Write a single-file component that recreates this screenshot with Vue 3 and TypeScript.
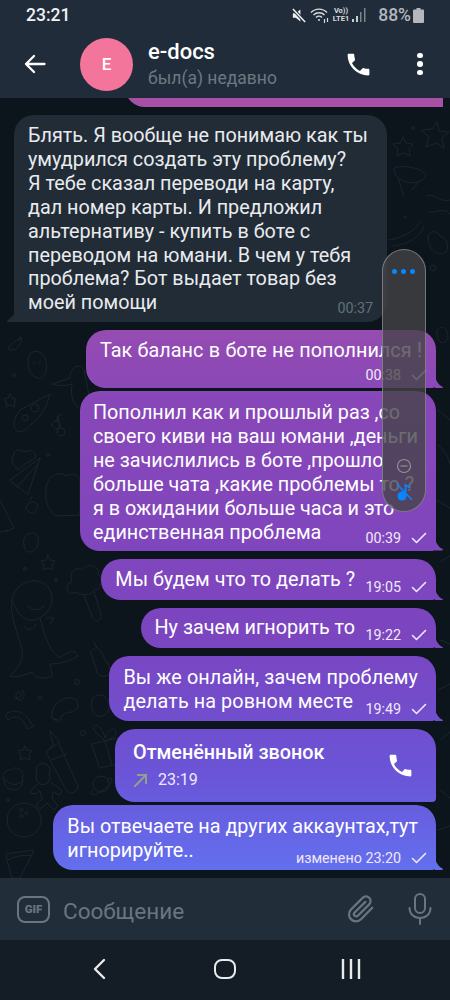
<script setup lang="ts">
type Msg = {
  id: number;
  lines: string[];
  time: string;
  cls: string;
};

const outgoing: Msg[] = [
  { id: 1, lines: ["Так баланс в боте не пополнился !"], time: "00:38", cls: "m-b2" },
  {
    id: 2,
    lines: [
      "Пополнил как и прошлый раз ,со",
      "своего киви на ваш юмани ,деньги",
      "не зачислились в боте ,прошло",
      "больше чата ,какие проблемы то ?",
      "я в ожидании больше часа и это",
      "единственная проблема",
    ],
    time: "00:39",
    cls: "m-b3",
  },
  { id: 3, lines: ["Мы будем что то делать ?"], time: "19:05", cls: "m-b4" },
  { id: 4, lines: ["Ну зачем игнорить то"], time: "19:22", cls: "m-b5" },
  {
    id: 5,
    lines: ["Вы же онлайн, зачем проблему", "делать на ровном месте"],
    time: "19:49",
    cls: "m-two",
  },
];

const incoming = [
  "Блять. Я вообще не понимаю как ты",
  "умудрился создать эту проблему?",
  "Я тебе сказал переводи на карту,",
  "дал номер карты. И предложил",
  "альтернативу - купить в боте с",
  "переводом на юмани. В чем у тебя",
  "проблема? Бот выдает товар без",
  "моей помощи",
];

const phonePath =
  "M6.6 10.8c1.4 2.8 3.8 5.1 6.6 6.6l2.2-2.2c.3-.3.7-.4 1-.2 1.1.4 2.3.6 3.6.6.6 0 1 .4 1 1V20c0 .6-.4 1-1 1C10.6 21 3 13.4 3 4c0-.6.4-1 1-1h3.5c.6 0 1 .4 1 1 0 1.300.2 2.500.6 3.600.1.300 0 .700-.2 1z";

// wallpaper doodles, in screen coordinates
const doodles: string[] = [
  // dino
  "M12 600C14 585 30 578 40 582 50 584 54 596 51 605 48 614 38 622 28 620 22 618 16 612 12 600ZM12 600C9 615 18 632 22 650 24 660 18 668 10 676 14 678 24 676 32 672 34 678 44 680 52 676 52 670 50 668 50 664 60 664 72 660 78 656 74 648 68 652 60 658 46 648 44 630 40 618M28 606C32 611 40 611 44 606M46 618 54 618 50 624M24 626C28 632 34 630 36 624",
  // broccoli + stick
  "M72 582C68 572 76 566 82 570 88 562 100 566 98 574 104 578 102 590 94 590 92 596 80 596 76 592 70 596 64 590 68 584ZM84 596 92 616C94 624 102 622 101 614L94 592",
  // popsicle + duck
  "M92 656C88 650 96 645 100 650L110 668C112 674 104 680 98 674ZM94 642 97 648",
  "M92 700C96 692 106 694 108 702 112 708 106 718 98 716 92 714 90 706 92 700Z",
  // shrimp, rainbow, spiral
  "M52 718C50 706 62 696 72 698 80 700 80 710 72 712 66 712 62 714 60 720ZM52 718 58 722",
  "M6 714C14 708 26 712 30 722L34 726 28 729 22 720C18 716 12 716 8 720Z",
  "M22 690C26 694 24 700 20 700 16 700 14 694 18 692 22 690 24 700 14 698",
  // small circles and stars
  "M48 555l2 5 5 1-3 4 1 5-5-2-5 2 1-5-3-4 5-1z",
  "M25 746l2 4 5 1-3 4 1 5-5-2-5 2 1-5-3-4 5-1z",
  "M10 394l2 4 4 1-2 4 1 4-5-2-4 2 1-4-3-4 4-1z",
  "M403 137l3 6 7 1-4 5 1 7-7-3-6 3 1-7-5-5 7-1z",
  "M437 122l2 9 10 1-7 6 2 10-8-5-10 4 3-10-8-7 11-1z",
  // pencil
  "M50 731 53 745 46 752 66 790C70 796 78 792 78 786L60 746 58 740ZM52 760 66 754M57 744 49 749",
  // gift
  "M92 744 118 738 124 762 100 768ZM105 741 112 765M105 741C96 732 92 730 94 726 98 722 104 732 105 738 108 730 114 726 116 732 116 738 110 738 105 741",
  // cupcake
  "M4 780C0 774 8 768 12 770 16 764 26 772 22 778 24 784 20 790 14 790 8 790 4 786 4 780ZM6 780C10 786 18 786 24 780",
  // gingerbread
  "M37 774a7 7 0 1 0 12 0 7 7 0 1 0-12 0M38 784l-6 5-2 4 5 1 5-3 2 8-6 6 4 4 7-6 7 7 4-4-6-8 1-6 7 3 2-4-6-5-5-3",
  // planet
  "M93 784a8 8 0 1 0 16 0 8 8 0 1 0-16 0M93 790C89 794 91 796 96 794 102 792 112 784 112 780 112 778 110 778 108 779",
  // bowling ball
  "M7 820a17 17 0 1 0 34 0 17 17 0 1 0-34 0M20 810a1.500 1.500 0 1 0 3 0 1.500 1.500 0 1 0-3 0M25 813a1.500 1.500 0 1 0 3 0 1.500 1.500 0 1 0-3 0M20 816a1.500 1.500 0 1 0 3 0 1.500 1.500 0 1 0-3 0",
  // pizza slice
  "M6 854 34 850 20 878H12ZM8 860C16 856 26 854 32 856",
  // leaf, ghost, cherries
  "M8 348C12 342 18 340 22 338 20 344 18 350 12 350ZM18 340 21 336",
  "M28 360C28 348 44 348 46 362 48 372 44 380 38 378 30 376 28 370 28 360ZM34 362v2M40 362v2",
  "M52 425a4 4 0 1 0 8 0 4 4 0 1 0-8 0M57 432a4 4 0 1 0 8 0 4 4 0 1 0-8 0M56 421 58 416M60 428 58 416 62 414",
  // bird
  "M52 384 70 378C70 368 78 362 84 370L90 400M52 384C60 386 66 386 72 384 70 398 74 404 78 408",
  // pizza mushroom
  "M20 410 50 394C46 410 38 420 30 425 24 434 14 434 14 424 14 418 18 414 20 410ZM31 408a4 4 0 1 0 8 0 4 4 0 1 0-8 0M22 418a3 3 0 1 0 6 0 3 3 0 1 0-6 0",
  // popcorn
  "M10 480 40 458 28 494ZM14 454C14 448 22 450 24 452 30 448 36 452 36 458 30 460 22 466 18 470 12 464 10 460 14 454ZM16 488 38 464",
  // cloud on the left of the purple bubble
  "M46 490C46 476 60 470 66 476 72 472 80 476 80 480L80 515 56 516C50 512 44 502 46 490Z",
  "M26 508C28 500 36 500 38 506 36 514 30 516 26 508ZM30 500 32 497",
  "M24 545C20 534 36 528 38 538 40 546 34 552 30 552 26 552 24 550 24 545Z",
  "M0 500 14 528 6 532M0 532 8 530",
  // right edge
  "M394 168C402 164 424 168 426 176 418 186 404 184 396 176ZM398 178 404 196M420 180 412 190",
  "M426 196C434 192 442 204 450 200M428 212C436 214 444 206 450 214",
  "M388 240C396 240 416 232 420 222M392 246C402 246 420 240 424 226",
  "M428 238C428 230 438 230 440 236 446 238 450 244 446 252 440 256 430 254 428 238Z",
  "M430 268a3 3 0 1 0 6 0 3 3 0 1 0-6 0",
  "M437 330C442 324 448 328 448 338 444 346 436 344 437 330ZM438 410 450 420M438 445C444 450 448 456 450 464M436 500 450 508M440 562 450 556M440 640 450 644M438 690 450 684M440 740 450 732M440 790 450 798M438 830 450 826",
];
</script>

<template>
  <div class="screen">
    <header class="top">
      <div class="status">
        <span class="clock">23:21</span>
        <div class="status-right">
          <svg class="st-mute" width="16" height="17" viewBox="0 0 17 17">
            <path d="M2 6h3l5-4v13l-5-4H2z" fill="#eceef0" />
            <path d="M2 1.500 15 15.500" stroke="#212c3a" stroke-width="3.500" />
            <path d="M2 1.500 15 15.500" stroke="#eceef0" stroke-width="1.600" />
          </svg>
          <svg class="st-wifi" width="20" height="17" viewBox="0 0 20 17" fill="none" stroke="#d8dbde" stroke-width="1.400">
            <path d="M1 5.500c4.500-4.500 11.500-4.500 16 0" />
            <path d="M3.500 8c3-3 8-3 11 0" />
            <path d="M6 10.500c1.700-1.700 4.300-1.700 6 0" />
            <circle cx="9" cy="13" r="1" fill="#d8dbde" stroke="none" />
            <path d="M14.500 16v-4M17.500 11v4" stroke-width="1.200" />
          </svg>
          <span class="volte">Vo))<br />LTE1</span>
          <svg class="st-signal" width="15" height="15" viewBox="0 0 15 15">
            <rect x="0" y="11" width="2" height="3" fill="#c8ccd0" />
            <rect x="4" y="8" width="2" height="6" fill="#c8ccd0" />
            <rect x="8" y="4" width="1.500" height="10" fill="#7d858d" />
            <rect x="12" y="0" width="1.500" height="14" fill="#7d858d" />
          </svg>
          <span class="pct">88%</span>
          <svg class="st-batt" width="11" height="15" viewBox="0 0 11 15">
            <path d="M3.500 0h4v1.500h2.500a1 1 0 0 1 1 1V14a1 1 0 0 1-1 1H1a1 1 0 0 1-1-1V2.500a1 1 0 0 1 1-1h2.500z" fill="#b4b8bc" />
          </svg>
        </div>
      </div>
      <div class="bar">
        <svg class="back" width="22" height="20" viewBox="0 0 22 20" fill="none" stroke="#fff" stroke-width="2.300" stroke-linecap="round" stroke-linejoin="round">
          <path d="M20.500 10H2M10 2 2 10l8 8" />
        </svg>
        <div class="avatar">E</div>
        <div class="who">
          <div class="name">e-docs</div>
          <div class="seen">был(а) недавно</div>
        </div>
        <svg class="call-ic" width="29" height="29" viewBox="0 0 24 24"><path :d="phonePath" fill="#fff" /></svg>
        <div class="more"><i></i><i></i><i></i></div>
      </div>
    </header>

    <main class="chat">
      <svg class="wall" width="450" height="780" viewBox="0 98 450 780" fill="none" stroke="#1a2530" stroke-width="1" stroke-linecap="round" stroke-linejoin="round">
        <path v-for="(d, i) in doodles" :key="i" :d="d" />
        <circle cx="14" cy="375" r="1.500" />
        <circle cx="48" cy="455" r="1.500" />
        <circle cx="25" cy="569" r="1.500" />
        <circle cx="56" cy="580" r="1.500" />
        <circle cx="77" cy="682" r="2.500" />
        <circle cx="40" cy="698" r="2" />
        <circle cx="83" cy="733" r="2.500" />
        <circle cx="8" cy="800" r="1.500" />
        <circle cx="413" cy="128" r="1.500" />
        <circle cx="405" cy="217" r="1.200" />
      </svg>

      <div class="msg out clipped"></div>

      <div class="msg in">
        <div class="cell">
          <div class="txt">
            <div v-for="l in incoming" :key="l">{{ l }}</div>
          </div>
          <span class="meta-in">00:37</span>
        </div>
        <svg class="tail-in" width="9" height="12" viewBox="0 0 9 12"><path d="M9 0v12H1c-1 0-1.300-.8-.6-1.500C4 8 7 5 9 0z" fill="#212c37" /></svg>
      </div>

      <div v-for="m in outgoing" :key="m.id" class="msg out" :class="m.cls">
        <div class="cell">
          <div class="txt">
            <div v-for="l in m.lines" :key="l">{{ l }}</div>
          </div>
          <span class="meta">
            {{ m.time }}
            <svg width="16" height="12" viewBox="0 0 16 12" fill="none" stroke="currentColor" stroke-width="1.600" stroke-linecap="round" stroke-linejoin="round"><path d="M1.500 6.500 5.500 10.500 14.500 1.500" /></svg>
          </span>
        </div>
      </div>

      <div class="msg out call-msg">
        <div class="call-body">
          <div class="call-title">Отменённый звонок</div>
          <div class="call-sub">
            <svg width="15" height="15" viewBox="0 0 15 15" fill="none" stroke="#8f9f8f" stroke-width="2" stroke-linecap="square"><path d="M2 13 13 2M5 2h8v8" /></svg>
            <span>23:19</span>
          </div>
        </div>
        <svg class="call-big" width="29" height="29" viewBox="0 0 24 24"><path :d="phonePath" fill="#fff" /></svg>
      </div>

      <div class="msg out last">
        <div class="cell">
          <div class="txt">
            <div>Вы отвечаете на других аккаунтах,тут</div>
            <div>игнорируйте..</div>
          </div>
          <span class="meta">
            изменено 23:20
            <svg width="16" height="12" viewBox="0 0 16 12" fill="none" stroke="currentColor" stroke-width="1.600" stroke-linecap="round" stroke-linejoin="round"><path d="M1.500 6.500 5.500 10.500 14.500 1.500" /></svg>
          </span>
        </div>
      </div>

      <aside class="float-panel">
        <div class="pdots"><i></i><i></i><i></i></div>
        <svg class="pminus" width="16" height="16" viewBox="0 0 16 16" fill="none" stroke="#8f9296" stroke-width="1.200"><circle cx="8" cy="8" r="6.500" /><path d="M4.500 8h7" /></svg>
        <svg class="pmute" width="18" height="20" viewBox="0 0 18 20">
          <circle cx="6" cy="14" r="4.500" fill="#0a84ff" />
          <path d="M9.500 14V3l5 3" fill="none" stroke="#0a84ff" stroke-width="1.800" />
          <path d="M1 2l15 16" stroke="#0a84ff" stroke-width="1.500" />
        </svg>
      </aside>
    </main>

    <div class="composer">
      <span class="gif">GIF</span>
      <span class="placeholder">Сообщение</span>
      <svg class="clip" width="30" height="30" viewBox="0 0 24 24" fill="none" stroke="#6b7580" stroke-width="1.800" stroke-linecap="round" stroke-linejoin="round">
        <path d="M21 11 12 20.200a5.500 5.500 0 0 1-8-7.800l9.300-9.300a3.700 3.700 0 0 1 5.300 5.200L9.500 17.400a1.800 1.800 0 0 1-2.600-2.600L15.500 6.300" />
      </svg>
      <svg class="mic" width="24" height="32" viewBox="0 0 24 32" fill="none" stroke="#6b7580" stroke-width="2" stroke-linecap="round">
        <rect x="7" y="1" width="10" height="19" rx="5" />
        <path d="M1.500 15c0 6 4.500 10 10.500 10s10.500-4 10.500-10M12 25v6" />
      </svg>
    </div>

    <nav class="navbar">
      <svg width="14" height="22" viewBox="0 0 14 22" fill="none" stroke="#e8eaec" stroke-width="2.400" stroke-linecap="round" stroke-linejoin="round"><path d="M12 2 3 11l9 9" /></svg>
      <span class="home"></span>
      <svg width="20" height="20" viewBox="0 0 20 20" stroke="#e8eaec" stroke-width="2.400"><path d="M2 0v20M10 0v20M18 0v20" /></svg>
    </nav>
  </div>
</template>

<style scoped>
.screen {
  width: 450px;
  height: 1000px;
  display: flex;
  flex-direction: column;
  overflow: hidden;
  background: #0d151c;
  font-family: Roboto, "Liberation Sans", sans-serif;
  color: #fff;
}

.top {
  height: 98px;
  flex-shrink: 0;
  background: #212c3a;
}

.status {
  height: 30px;
  display: flex;
  align-items: center;
  justify-content: space-between;
  padding: 0 26px;
}

.clock {
  font-size: 17.500px;
  font-weight: 500;
  color: #f0f1f2;
}

.status-right {
  display: flex;
  align-items: center;
}

.st-wifi {
  margin-left: 3px;
}

.volte {
  font-size: 7.500px;
  line-height: 8px;
  font-weight: 700;
  color: #d8dbde;
  margin-left: 3px;
  text-align: center;
}

.st-signal {
  margin-left: 3px;
}

.pct {
  font-size: 17.500px;
  font-weight: 500;
  color: #b4b8bc;
  margin-left: 11px;
}

.st-batt {
  margin-left: 2px;
}

.bar {
  height: 68px;
  display: flex;
  align-items: center;
  padding: 0 0 2px 24px;
}

.back {
  flex-shrink: 0;
}

.avatar {
  width: 53px;
  height: 53px;
  border-radius: 50%;
  background: #f4759b;
  margin-left: 34px;
  display: flex;
  align-items: center;
  justify-content: center;
  font-size: 17px;
  font-weight: 500;
  flex-shrink: 0;
}

.who {
  margin-left: 15px;
  flex: 1;
}

.name {
  font-size: 22px;
  font-weight: 500;
  line-height: 26px;
}

.seen {
  font-size: 17.500px;
  line-height: 24px;
  margin-top: 1px;
  color: #6d7883;
}

.call-ic {
  margin-right: 44px;
}

.more {
  width: 6px;
  display: flex;
  flex-direction: column;
  gap: 3px;
  margin-right: 27px;
}

.more i {
  width: 5.500px;
  height: 5.500px;
  border-radius: 50%;
  background: #fff;
}

.chat {
  position: relative;
  flex: 1;
  min-height: 0;
  overflow: hidden;
  display: flex;
  flex-direction: column;
  justify-content: flex-end;
  padding-bottom: 8px;
}

.wall {
  position: absolute;
  inset: 0;
}

.msg {
  position: relative;
  flex-shrink: 0;
  font-size: 19.800px;
  line-height: 23.900px;
}

.out {
  align-self: flex-end;
  margin-right: 14px;
  padding: 10px 18px 7px 14px;
  border-radius: 20px 20px 4px 20px;
  background: linear-gradient(180deg, #a650a6 0, #9c4eaf 200px, #8847b8 300px, #7b45c0 540px, #6a55d8 680px, #6272f0 780px) fixed;
  background-position: 0 98px;
  background-size: 450px 780px;
  background-repeat: no-repeat;
  color: #fff;
}

.clipped {
  width: 318px;
  height: 40px;
  padding: 0;
  margin-bottom: 8px;
  margin-right: 7px;
  border-radius: 0 0 0 20px;
}

.in {
  width: 345px;
  margin-left: 14px;
  padding: 9px 14px 7px;
  border-radius: 20px 20px 20px 4px;
  background: #212c37;
  margin-bottom: 8px;
  color: #e9ebee;
}

.tail-in {
  position: absolute;
  left: -7px;
  bottom: 0;
}

.cell {
  display: grid;
}

.cell > * {
  grid-area: 1 / 1;
}

.meta-in {
  justify-self: end;
  align-self: end;
  margin: 0 0 -2px 0;
  font-size: 14.300px;
  line-height: 18px;
  color: #657079;
}

.meta {
  justify-self: end;
  align-self: end;
  display: flex;
  align-items: center;
  gap: 10px;
  margin: 0 -9px -4px 0;
  font-size: 14.300px;
  line-height: 18px;
  color: #f0e8f8;
  white-space: nowrap;
}

.out::after {
  content: "";
  position: absolute;
  right: -7px;
  bottom: 0;
  width: 8px;
  height: 12px;
  background: inherit;
  clip-path: path("M0 0C1 5 4 9 7.500 10.500 8.300 11 8 12 7 12H0Z");
}

.clipped::after {
  display: none;
}

.m-b2 {
  margin-bottom: 3px;
  padding: 9px 14px 8px;
  word-spacing: 0.5px;
}

.m-b2 .txt {
  padding-bottom: 17px;
}

.m-b2 .meta {
  margin-right: -5px;
}

.m-b3 {
  margin-bottom: 8px;
  padding-top: 10px;
  padding-bottom: 6px;
  padding-left: 13px;
}

.m-b3 .meta {
  margin-bottom: -2px;
}

.m-b4,
.m-b5 {
  margin-bottom: 8px;
  padding-right: 14px;
}

.m-b4 .txt,
.m-b5 .txt {
  padding-right: 67px;
}

.m-b4 .meta,
.m-b5 .meta {
  margin-right: -5px;
}

.m-b4 {
  padding-top: 9px;
  padding-bottom: 9px;
}

.m-b4 .meta {
  margin-bottom: -5px;
}

.m-b5 {
  padding-top: 8px;
  padding-bottom: 8px;
}

.m-two {
  margin-bottom: 8px;
  letter-spacing: 0.1px;
}

.m-two .meta {
  letter-spacing: 0;
}

.call-msg {
  width: 321px;
  height: 73px;
  padding: 0 21px 0 18px;
  box-sizing: border-box;
  margin-bottom: 3px;
  display: flex;
  align-items: center;
  justify-content: space-between;
  border-radius: 20px 20px 4px 20px;
}

.call-msg::after {
  display: none;
}

.call-title {
  font-size: 19.800px;
  font-weight: 500;
  line-height: 24px;
}

.call-sub {
  display: flex;
  align-items: center;
  gap: 10px;
  margin-top: 5px;
  font-size: 16px;
  line-height: 20px;
  color: #eee8fb;
}

.float-panel {
  position: absolute;
  left: 382px;
  top: 151px;
  width: 44px;
  height: 263px;
  box-sizing: border-box;
  border-radius: 22px;
  background: rgba(68, 68, 70, 0.78);
  border: 1px solid rgba(140, 140, 144, 0.75);
}

.pdots {
  position: absolute;
  top: 19px;
  left: 9px;
  display: flex;
  gap: 4px;
}

.pdots i {
  width: 5px;
  height: 5px;
  border-radius: 50%;
  background: #0a84ff;
}

.pminus {
  position: absolute;
  left: 13px;
  bottom: 37px;
}

.pmute {
  position: absolute;
  left: 13px;
  bottom: 9px;
}

.composer {
  height: 62px;
  flex-shrink: 0;
  background: #212d38;
  display: flex;
  align-items: center;
  padding-left: 17px;
  color: #6b7580;
}

.gif {
  width: 33px;
  height: 27px;
  margin-top: 1px;
  box-sizing: border-box;
  border: 2px solid #6b7580;
  border-radius: 8px;
  font-size: 11.500px;
  font-weight: 900;
  line-height: 23px;
  text-align: center;
}

.placeholder {
  margin: 4px 0 0 13px;
  flex: 1;
  font-size: 22.500px;
}

.clip {
  margin-right: 32px;
}

.mic {
  margin-right: 18px;
}

.navbar {
  height: 60px;
  flex-shrink: 0;
  background: #141c25;
  display: flex;
  align-items: center;
  padding-bottom: 2px;
  box-sizing: border-box;
}

.navbar > svg:first-child {
  margin-left: 92px;
}

.home {
  width: 22px;
  height: 20px;
  box-sizing: border-box;
  border: 2.500px solid #e8eaec;
  border-radius: 8px;
  margin-left: 108px;
}

.navbar > svg:last-child {
  margin-left: 105px;
}
</style>

<style>
html,
body {
  margin: 0;
  overflow: hidden;
}
</style>
